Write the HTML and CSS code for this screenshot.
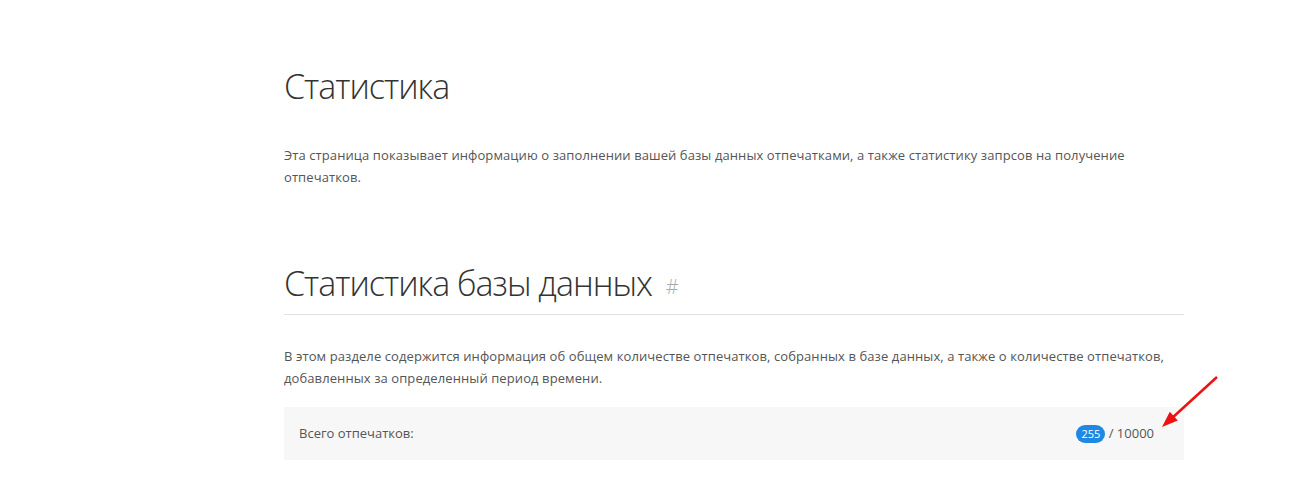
FILE: index.html
```html
<!DOCTYPE html>
<html lang="ru">
<head>
<meta charset="utf-8">
<link rel="stylesheet" href="styles.css">
</head>
<body>
<main class="content">
  <h1 class="title">Статистика</h1>
  <p class="text intro">Эта страница показывает информацию о заполнении вашей базы данных отпечатками, а также статистику запрсов на получение отпечатков.</p>
  <h2 class="section-title">Статистика базы данных <a class="anchor" href="#">#</a></h2>
  <p class="text">В этом разделе содержится информация об общем количестве отпечатков, собранных в базе данных, а также о количестве отпечатков, добавленных за определенный период времени.</p>
  <div class="stat-row">
    <span class="stat-label">Всего отпечатков:</span>
    <span class="stat-value"><span class="badge">255</span> / 10000</span>
    <svg class="arrow" width="70" height="60" viewBox="0 0 70 60">
      <line x1="61" y1="2" x2="15" y2="44" stroke="#ee1111" stroke-width="2.5"/>
      <polygon points="6,52 13.8,36.8 21.8,45.6" fill="#ee1111"/>
    </svg>
  </div>
</main>
</body>
</html>
```
FILE: styles.css
```css
html, body {
  margin: 0;
  padding: 0;
  background: #ffffff;
}
body {
  font-family: "Open Sans", "Noto Sans", sans-serif;
  color: #555555;
}
.content {
  width: 900px;
  margin: 0 0 0 284px;
  padding-top: 60px;
}
.title {
  font-weight: 300;
  font-size: 34px;
  letter-spacing: -1px;
  line-height: 52px;
  color: #333333;
  margin: 0 0 32px 0;
}
.text {
  font-size: 13px;
  letter-spacing: 0.09px;
  line-height: 22px;
  margin: 0;
}
.intro {
  margin-bottom: 69px;
}
.section-title {
  font-weight: 300;
  font-size: 34px;
  letter-spacing: -1px;
  line-height: 52px;
  color: #333333;
  margin: 0 0 30px 0;
  padding-bottom: 1px;
  border-bottom: 1px solid #e2e2e2;
}
.anchor {
  font-size: 20px;
  letter-spacing: 0;
  color: #aaaaaa;
  text-decoration: none;
  margin-left: 6px;
  vertical-align: middle;
}
.stat-row {
  position: relative;
  margin-top: 18px;
  background: #f7f7f7;
  height: 53px;
  display: flex;
  align-items: center;
  justify-content: space-between;
  padding: 0 30px 0 15px;
  font-size: 13px;
  color: #555555;
}
.badge {
  display: inline-block;
  background: #1e88e5;
  color: #ffffff;
  border-radius: 9px;
  padding: 0 5px;
  font-size: 11px;
  line-height: 18px;
}
.arrow {
  position: absolute;
  right: -42px;
  top: -32px;
}
```
